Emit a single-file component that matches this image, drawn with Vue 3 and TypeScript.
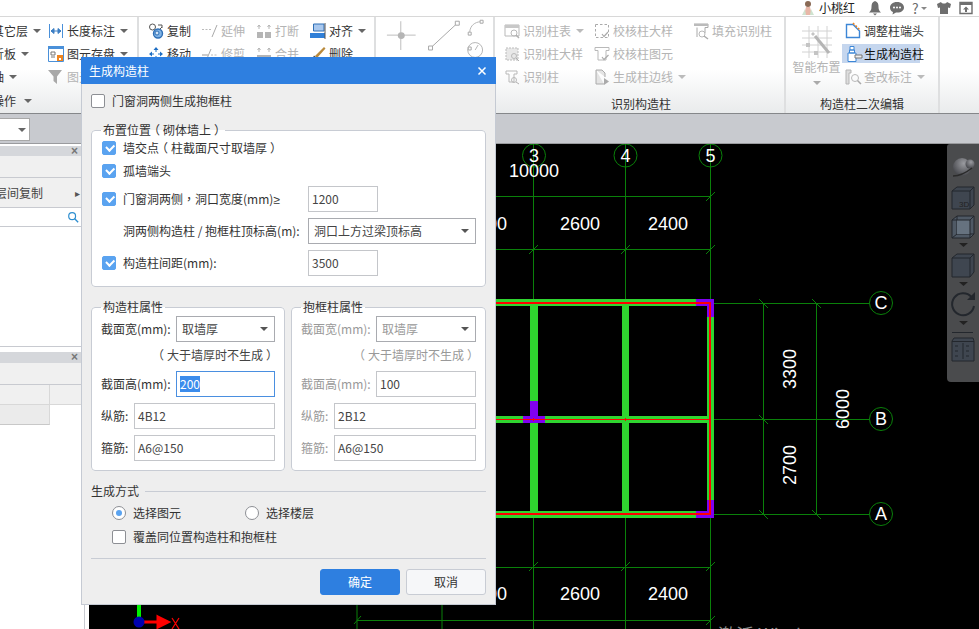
<template>
  <div class="app">
    <div class="title-bar">
      <svg class="avatar" viewBox="0 0 14 16"><circle cx="7" cy="4" r="3" fill="#8a6a55" /><path d="M3 15 L5 7 H9 L11 15 Z" fill="#e8b7a8" /><path d="M1 15 L4 9 L5 15 Z M13 15 L10 9 L9 15 Z" fill="#cfe3d0" /></svg>
      <span class="user">小桃红</span>
      <svg class="top-icon bell" viewBox="0 0 14 16"><path d="M7 1 C4 2 3.500 4 3.500 7 C3.500 10 2.500 11 1 12.500 H13 C11.500 11 10.500 10 10.500 7 C10.500 4 10 2 7 1 Z M5 13.500 H9 L7 15.500 Z" fill="#6e6e6e" /></svg>
      <svg class="top-icon chat" viewBox="0 0 16 14"><path d="M8 1 C3.500 1 1 3.500 1 6.500 C1 9 2.500 10.500 4 11 L3.500 13.500 L7 11.500 C12 12 15 9.500 15 6.500 C15 3.500 12.500 1 8 1 Z" fill="#6e6e6e" /><circle cx="5" cy="6.500" r="1" fill="#fff" /><circle cx="8" cy="6.500" r="1" fill="#fff" /><circle cx="11" cy="6.500" r="1" fill="#fff" /></svg>
      <span class="help">?</span><i class="caret help-caret"></i>
      <svg class="top-icon shirt" viewBox="0 0 16 14"><path d="M5 1 L1 3 L2 7 L4 6.500 V13 H12 V6.500 L14 7 L15 3 L11 1 C10 3 6 3 5 1 Z" fill="#6e6e6e" /></svg>
      <svg class="top-icon upload" viewBox="0 0 14 14"><path d="M1 1.500 H13 V12.500 H1 Z" fill="none" stroke="#6e6e6e" stroke-width="1.400" /><path d="M1 1 H13 V4 H1 Z" fill="#6e6e6e" /><path d="M7 5.500 L10 8.500 H8 V11 H6 V8.500 H4 Z" fill="#6e6e6e" /></svg>
    </div>

    <div class="ribbon">
      <div v-for="group in groups" :key="group.id" class="group" :class="group.id">
        <div class="cols">
          <template v-if="group.id === 'draw'">
            <svg class="draw-icons" viewBox="375 17 118 69">
              <path d="M400 24 V53 M386 38 H415" stroke="#bdbdbd" fill="none" />
              <circle cx="400.500" cy="38.500" r="3.500" fill="#b5b5b5" />
              <path d="M430 51 L457 26" stroke="#a8a8a8" fill="none" />
              <path d="M428 49 h4 v4 h-4 Z M455 24 h4 v4 h-4 Z M468 35 h3 v3 h-3 Z M480 23 h3 v3 h-3 Z M468 50 h3 v3 h-3 Z" fill="#fff" stroke="#a8a8a8" />
              <path d="M469.500 35 C470 28 475 25 480 24.500" stroke="#b5b5b5" fill="none" />
              <circle cx="475" cy="53" r="7.500" fill="none" stroke="#b5b5b5" />
              <path d="M475 53 L478 48" stroke="#b5b5b5" />
            </svg>
          </template>
          <div v-if="group.id === 'edit2'" class="big-btn">
            <svg class="big-icon" viewBox="0 0 34 34">
              <path d="M2 6 H32 M2 13 H32 M2 20 H32 M2 27 H32 M9 1 V33 M18 1 V33 M27 1 V33" stroke="#d2d2d2" fill="none" />
              <path d="M15 11 L29 28" stroke="#b5b5b5" stroke-width="3" />
              <path d="M11 9 l2 -2 l2 2 l-2 2 Z M6 18 h4 v4 h-4 Z M14 26 h4 v4 h-4 Z" fill="#c4c4c4" />
            </svg>
            <span>智能布置</span>
            <i class="caret"></i>
          </div>
          <div v-for="(col, i) in group.cols" :key="i" class="col" :style="{ width: col.width + 'px' }">
            <div v-for="item in col.items" :key="item.label" class="item" :class="{ off: item.off, active: item.active }">
              <svg v-if="item.icon" class="icon" viewBox="0 0 16 16" v-html="icons[item.icon]"></svg>
              <span>{{ item.label }}</span>
              <i v-if="item.caret" class="caret"></i>
            </div>
          </div>
        </div>
        <div class="group-label" :class="{ left: group.id === 'first' }">
          {{ group.label }}<i v-if="group.id === 'first'" class="caret"></i>
        </div>
      </div>
    </div>

    <div class="band">
      <div class="band-select"><i class="caret"></i></div>
    </div>

    <div class="main">
      <aside class="side">
        <div class="panel-head"><span>×</span></div>
        <div class="side-row"></div>
        <div class="side-row copy-row"><span>楼层间复制</span><em>▸</em></div>
        <div class="search">
          <svg viewBox="0 0 14 14"><circle cx="6" cy="6" r="4" fill="none" stroke="#2f8fd0" stroke-width="1.400" /><path d="M9 9 L13 13" stroke="#2f8fd0" stroke-width="1.600" /></svg>
        </div>
        <div class="side-list"></div>
        <div class="panel-head second"><span>×</span></div>
        <div class="side-row"></div>
        <div class="side-table">
          <div class="cell"></div><div class="cell"></div>
          <div class="cell dark"></div><div class="cell blank"></div>
        </div>
      </aside>

      <div class="canvas">
        <svg class="cad" viewBox="89 144 890 485">
          <g stroke="#0a800a" fill="none">
            <path v-for="l in gridLines" :key="l" :d="l" />
            <circle v-for="a in axes" :key="a.t" :cx="a.x" :cy="a.y" r="11.500" />
          </g>
          <g fill="#2fd52f">
            <rect v-for="(w, i) in walls" :key="i" :x="w[0]" :y="w[1]" :width="w[2]" :height="w[3]" />
          </g>
          <g fill="#8000f0">
            <rect v-for="(w, i) in columns" :key="i" :x="w[0]" :y="w[1]" :width="w[2]" :height="w[3]" />
          </g>
          <path d="M357 303 H710 V514 H357" stroke="#ff0000" stroke-width="2" fill="none" />
          <path d="M357 419.500 H710 M533.500 418 V421 M625.500 418 V421" stroke="#ff0000" fill="none" />
          <g fill="#fff" class="dim">
            <text v-for="a in axes" :key="a.t" :x="a.x" :y="a.y + 6" text-anchor="middle">{{ a.t }}</text>
            <text x="534" y="177" text-anchor="middle">10000</text>
            <text v-for="d in dims" :key="d.x + '-' + d.y" :x="d.x" :y="d.y" text-anchor="middle">{{ d.t }}</text>
            <text transform="translate(796 369) rotate(-90)" text-anchor="middle">3300</text>
            <text transform="translate(796 465) rotate(-90)" text-anchor="middle">2700</text>
            <text transform="translate(849 409) rotate(-90)" text-anchor="middle">6000</text>
          </g>
          <path d="M139 604 V620" stroke="#00f000" stroke-width="4" />
          <path d="M142 622 H158 M158 617 L168 622 L158 627 Z" stroke="#f00" stroke-width="3" fill="#f00" />
          <circle cx="139" cy="622" r="5.500" fill="#0000b0" />
          <path d="M172 618 L179 629 M179 618 L172 629" stroke="#f00" stroke-width="1.200" />
          <text x="718" y="642" class="watermark">激活 Windows</text>
        </svg>

        <div class="view-tools">
          <svg viewBox="0 0 32 238">
            <defs>
              <radialGradient id="sphere" cx="0.6" cy="0.3" r="0.8">
                <stop offset="0" stop-color="#9a9ba0" />
                <stop offset="1" stop-color="#3c3d42" />
              </radialGradient>
            </defs>
            <circle cx="15" cy="23" r="9" fill="url(#sphere)" />
            <circle cx="23" cy="20" r="4.500" fill="url(#sphere)" />
            <path d="M6 32 C12 32 20 28 25 24" stroke="#2a2a2a" stroke-width="1.400" fill="none" />
            <g stroke="#23272d" fill="#3f4650">
              <path d="M5 47 L10 43 H27 V61 L23 65 H5 Z" />
              <path d="M5 47 H23 V65 M23 47 L27 43" fill="none" />
              <path d="M5 76 L10 72 H27 V90 L23 94 H5 Z" fill="#4f5965" />
              <path d="M10 72 V90 H27 M10 90 L5 94" fill="none" />
              <path d="M10 76 H23 V90 H10 Z" fill="#66727f" stroke="none" />
              <path d="M5 76 H23 V94 M23 76 L27 72" fill="none" />
              <path d="M5 114 L10 110 H27 V128 L23 133 H5 Z" />
              <path d="M5 114 H23 V133 M23 114 L27 110" fill="none" />
            </g>
            <text x="12" y="63" class="three-d">3D</text>
            <path d="M12 99 h9 l-4.500 4 Z M12 138 h9 l-4.500 4 Z M12 177 h9 l-4.500 4 Z" fill="#222" />
            <path d="M24.500 153 A11 11 0 1 0 27 162" stroke="#23272d" stroke-width="2" fill="none" />
            <path d="M20 156 H28 V148 Z" fill="#23272d" />
            <path d="M5 188.500 H26" stroke="#23272d" />
            <path d="M5 197 L7 194 H26 L27 197 V217 H5 Z" fill="#3f4650" stroke="#23272d" />
            <path d="M5 197.500 H27 M16 199 V215 M8 202 h3 M8 207 h3 M8 212 h3 M19 202 h3 M19 207 h3 M19 212 h3" stroke="#23272d" fill="none" />
          </svg>
        </div>
      </div>
    </div>

    <div class="dialog">
      <div class="dialog-head">
        <span>生成构造柱</span>
        <svg viewBox="0 0 10 10"><path d="M1.500 1.500 L8.500 8.500 M8.500 1.500 L1.500 8.500" stroke="#fff" stroke-width="1.500" /></svg>
      </div>
      <div class="dialog-body">
        <label class="line top-check"><i class="check"></i>门窗洞两侧生成抱框柱</label>

        <fieldset class="box place">
          <legend>布置位置<b class="po">（</b>砌体墙上<b class="pc">）</b></legend>
          <div class="line first"><i class="check on"></i><span>墙交点<b class="po">（</b>柱截面尺寸取墙厚<b class="pc">）</b></span></div>
          <div class="line second"><i class="check on"></i>孤墙端头</div>
          <div class="line with-field third">
            <i class="check on"></i><span class="place-label">门窗洞两侧<b class="p">，</b>洞口宽度(mm)<b class="ge">≥</b></span>
            <div class="field narrow">1200</div>
          </div>
          <div class="line with-field next">
            <span class="place-label indent">洞两侧构造柱 / 抱框柱顶标高(m):</span>
            <div class="field wide sel">洞口上方过梁顶标高<i class="caret"></i></div>
          </div>
          <div class="line with-field next">
            <i class="check on"></i><span class="place-label">构造柱间距(mm):</span>
            <div class="field narrow">3500</div>
          </div>
        </fieldset>

        <div class="props">
          <fieldset class="box prop left-box">
            <legend>构造柱属性</legend>
            <div class="prop-row first-row"><span class="lbl long">截面宽(mm):</span><div class="field grow sel">取墙厚<i class="caret"></i></div></div>
            <div class="hint"><b class="po">（</b>大于墙厚时不生成<b class="pc">）</b></div>
            <div class="prop-row"><span class="lbl long">截面高(mm):</span><div class="field grow focus"><span class="selected">200</span></div></div>
            <div class="prop-row gap"><span class="lbl">纵筋:</span><div class="field grow">4B12</div></div>
            <div class="prop-row gap"><span class="lbl">箍筋:</span><div class="field grow">A6@150</div></div>
          </fieldset>
          <fieldset class="box prop right-box muted">
            <legend>抱框柱属性</legend>
            <div class="prop-row first-row"><span class="lbl long">截面宽(mm):</span><div class="field grow sel">取墙厚<i class="caret"></i></div></div>
            <div class="hint"><b class="po">（</b>大于墙厚时不生成<b class="pc">）</b></div>
            <div class="prop-row"><span class="lbl long">截面高(mm):</span><div class="field grow plain">100</div></div>
            <div class="prop-row gap"><span class="lbl">纵筋:</span><div class="field grow plain">2B12</div></div>
            <div class="prop-row gap"><span class="lbl">箍筋:</span><div class="field grow plain">A6@150</div></div>
          </fieldset>
        </div>

        <div class="mode-title"><span>生成方式</span><hr /></div>
        <div class="line radios">
          <span class="radio-item"><i class="radio on"></i>选择图元</span>
          <span class="radio-item"><i class="radio"></i>选择楼层</span>
        </div>
        <label class="line cover"><i class="check"></i>覆盖同位置构造柱和抱框柱</label>
        <hr class="foot-rule" />
        <div class="buttons">
          <button class="primary">确定</button>
          <button>取消</button>
        </div>
      </div>
    </div>
  </div>
</template>

<script setup lang="ts">
interface Item {
  label: string
  icon?: string
  caret?: boolean
  off?: boolean
  active?: boolean
}

const g = 'fill="none" stroke="#b9b9b9"'
const icons: Record<string, string> = {
  length: '<path d="M1.500 1 V15 M14.500 1 V15" stroke="#4a90d9"/><path d="M3 8 H13 M3 8 L6 5.500 V10.500 Z M13 8 L10 5.500 V10.500 Z" stroke="#3c7fc4" fill="#3c7fc4"/>',
  save: '<path d="M.5 .5 H15.500 V15.500 H.5 Z" fill="#fff" stroke="#4a90d9"/><path d="M0 0 H16 V3 H0 Z" fill="#4a90d9"/><path d="M3 6 H7 V9 H3 Z M3 11 H7" fill="none" stroke="#777"/><path d="M9 9 H15 V15 H9 Z" fill="#f0851f"/><path d="M11 12 H13 V14 H11 Z" fill="#fff"/>',
  filter: '<path d="M0 1 H14 L9 7.500 V15 L5.500 12 V7.500 Z" fill="#a9a9a9"/>',
  copy: '<circle cx="4.500" cy="4" r="3" fill="#fff" stroke="#555"/><circle cx="10" cy="10.500" r="4.500" fill="#7fb3e6" stroke="#2f6fb5" stroke-width="1.400"/><circle cx="9" cy="10" r="2" fill="#d5e6f7" stroke="#2f6fb5"/><path d="M10 2 H14 V5 M12 6 L14 4" fill="none" stroke="#555"/>',
  move: '<path d="M8 1 L10.500 4 H5.500 Z M8 15 L10.500 12 H5.500 Z M1 8 L4 5.500 V10.500 Z M15 8 L12 5.500 V10.500 Z" fill="#1f6fc4"/><path d="M8 4 V6 M8 10 V12 M4 8 H6 M10 8 H12" stroke="#1f6fc4"/>',
  extend: '<path d="M0 6.500 H9" stroke="#bbb" stroke-dasharray="2 1.500"/><path d="M10 14 L15 2" stroke="#aaa"/>',
  trim: '<path d="M0 9 H6" stroke="#999"/><path d="M9 9 H15" stroke="#bbb" stroke-dasharray="2 1.500"/><path d="M4 15 L9 3" stroke="#aaa"/>',
  split: '<path d="M1 9 H7 V15 H1 Z M9 9 H15 V15 H9 Z" fill="#b5b5b5"/><path d="M3 2 V6 M13 2 V6 M1.500 4 L3 2 L4.500 4 M11.500 4 L13 2 L14.500 4" fill="none" stroke="#b5b5b5"/>',
  merge: '<path d="M1 9 H15 V15 H1 Z" fill="#b5b5b5"/><path d="M3 2 V6 M13 2 V6 M1.500 4 L3 2 L4.500 4 M11.500 4 L13 2 L14.500 4" fill="none" stroke="#b5b5b5"/>',
  align: '<path d="M3.500 1 H14 V8 H3.500 Z" fill="#a9c8ee" stroke="#2f6fb5"/><path d="M0 10 H15 V15 H0 Z" fill="#2f7fd8"/><path d="M15 0 V16" stroke="#555"/>',
  remove: '<path d="M5 10 L14 1 L15.500 2.500 L7 12 Z" fill="#b98a3c"/><path d="M1 15 L4 9.500 L7.500 12.500 Z" fill="#444"/>',
  colTable: '<path d="M1 2 H15 V13 H1 Z" ' + g + '/><path d="M1 2 H15 V5 H1 Z" fill="#c8c8c8"/><circle cx="10" cy="10" r="3" ' + g + '/><path d="M12 12 L15 15" stroke="#b0b0b0" stroke-width="1.400"/>',
  colDetail: '<path d="M2 2 H14 V14 H2 Z" fill="#e8e8e8" stroke="#bbb" stroke-dasharray="2 1"/><circle cx="10" cy="10" r="2.500" ' + g + '/><path d="M12 12 L15 15" stroke="#b0b0b0"/>',
  col: '<path d="M2 2 H13 V5 H10 V13 H5 V5 H2 Z" ' + g + '/><circle cx="10" cy="11" r="2.500" ' + g + '/><path d="M12 13 L15 15" stroke="#b0b0b0"/>',
  checkDetail: '<path d="M1.500 1.500 H14.500 V14.500 H1.500 Z" fill="none" stroke="#aaa" stroke-dasharray="2.500 2"/><path d="M8 11 L10 13.500 L14 9" fill="none" stroke="#aaa" stroke-width="1.200"/>',
  checkCol: '<path d="M1 1.500 H15 V4.500 H12 V14 H4 V4.500 H1 Z" ' + g + '/><path d="M8 11 L10 13.500 L14.500 9" fill="none" stroke="#aaa" stroke-width="1.200"/>',
  edge: '<path d="M2 1 V15 H10 M2 1 H8 L11 4 V8" fill="#e4e4e4" stroke="#aaa"/><path d="M10 9 L15 12.500 L10 16 Z" fill="#aaa"/>',
  fill: '<path d="M1 1 H15 V4.500 H12 V10 M4 4.500 V14" fill="none" stroke="#aaa"/><path d="M1 1 H15 V3 H1 Z" fill="#bbb"/><circle cx="9" cy="11" r="3" ' + g + '/><path d="M11 13 L15 16" stroke="#aaa" stroke-width="1.400"/>',
  endAdjust: '<path d="M1.500 1.500 H8 L14.500 8 V14.500 H1.500 Z" fill="#fff" stroke="#3c86d6" stroke-width="1.400"/><path d="M8 0 L15 7" stroke="#f0851f" stroke-width="1.500" stroke-dasharray="2 1.500"/>',
  build: '<path d="M5 0.500 H9 V4 H5 Z M4.500 4 H9.500 V7 H4.500 Z M3 7 H11 V15.500 H3 Z" fill="#fff" stroke="#3c86d6"/><path d="M10 9 H17 V12 H10 Z" fill="#eee" stroke="#777"/>',
  editMark: '<path d="M1 1 H6 V4 H4 V15 H1 Z" fill="#ddd" stroke="#b5b5b5"/><circle cx="10" cy="9" r="3.500" ' + g + '/><path d="M12.500 11.500 L16 15" stroke="#aaa" stroke-width="1.500"/>'
}

const groups: { id: string; label: string; cols: { width: number; items: Item[] }[] }[] = [
  {
    id: 'first',
    label: '操作',
    cols: [
      { width: 56, items: [{ label: '其它层', caret: true }, { label: '折板', caret: true }, { label: '轴', caret: true }] },
      { width: 88, items: [
        { label: '长度标注', icon: 'length', caret: true },
        { label: '图元存盘', icon: 'save', caret: true },
        { label: '图元过滤', icon: 'filter', off: true }
      ] }
    ]
  },
  {
    id: 'modify',
    label: '',
    cols: [
      { width: 54, items: [{ label: '复制', icon: 'copy' }, { label: '移动', icon: 'move' }] },
      { width: 54, items: [{ label: '延伸', icon: 'extend', off: true }, { label: '修剪', icon: 'trim', off: true }] },
      { width: 54, items: [{ label: '打断', icon: 'split', off: true }, { label: '合并', icon: 'merge', off: true }] },
      { width: 60, items: [{ label: '对齐', icon: 'align', caret: true }, { label: '删除', icon: 'remove' }] }
    ]
  },
  { id: 'draw', label: '', cols: [] },
  {
    id: 'identify',
    label: '识别构造柱',
    cols: [
      { width: 90, items: [
        { label: '识别柱表', icon: 'colTable', caret: true, off: true },
        { label: '识别柱大样', icon: 'colDetail', off: true },
        { label: '识别柱', icon: 'col', off: true }
      ] },
      { width: 99, items: [
        { label: '校核柱大样', icon: 'checkDetail', off: true },
        { label: '校核柱图元', icon: 'checkCol', off: true },
        { label: '生成柱边线', icon: 'edge', caret: true, off: true }
      ] },
      { width: 90, items: [{ label: '填充识别柱', icon: 'fill', off: true }] }
    ]
  },
  {
    id: 'edit2',
    label: '构造柱二次编辑',
    cols: [
      { width: 88, items: [
        { label: '调整柱端头', icon: 'endAdjust' },
        { label: '生成构造柱', icon: 'build', active: true },
        { label: '查改标注', icon: 'editMark', caret: true, off: true }
      ] }
    ]
  }
]

const gridLines = [
  'M533.500 144 V629', 'M625.500 144 V629', 'M710.500 144 V629',
  'M357 604 V629', 'M442 604 V629',
  'M763.500 303 V514', 'M816.500 303 V514',
  'M89 196.500 H710', 'M89 249.500 H710', 'M89 567.500 H710', 'M357 620.500 H710',
  'M714 303.500 H869', 'M714 419.500 H869', 'M714 514.500 H869',
  'M529 254 L538 245', 'M621 254 L630 245', 'M706 254 L715 245', 'M706 201 L715 192',
  'M529 571 L538 562', 'M621 571 L630 562', 'M706 571 L715 562', 'M706 625 L715 616', 'M354 624 L361 616',
  'M759 299 L768 308', 'M812 299 L821 308', 'M759 415 L768 424', 'M759 510 L768 519', 'M812 510 L821 519'
]

const axes = [
  { t: '3', x: 534, y: 155.500 },
  { t: '4', x: 625.500, y: 155.500 },
  { t: '5', x: 710.500, y: 155.500 },
  { t: 'C', x: 881, y: 303 },
  { t: 'B', x: 881, y: 419 },
  { t: 'A', x: 881, y: 514 }
]

const dims = [
  { t: '2400', x: 487, y: 230 },
  { t: '2600', x: 580, y: 230 },
  { t: '2400', x: 668, y: 230 },
  { t: '2400', x: 487, y: 600 },
  { t: '2600', x: 580, y: 600 },
  { t: '2400', x: 668, y: 600 }
]

const walls = [
  [357, 299, 357, 7], [357, 416, 357, 7], [357, 511, 357, 7],
  [530, 299, 8, 219], [622, 299, 7, 219], [707, 299, 7, 219]
]

const columns = [
  [696, 299, 18, 7], [707, 299, 7, 18],
  [530, 401, 8, 22], [523, 416, 22, 7],
  [696, 511, 18, 7], [707, 500, 7, 18]
]
</script>

<style>
html, body { margin: 0; overflow: hidden; }
</style>

<style scoped>
.app {
  position: relative;
  width: 979px;
  height: 629px;
  display: flex;
  flex-direction: column;
  overflow: hidden;
  background: #fff;
  color: #333;
  font: 12px/16px "Noto Sans CJK SC", "Noto Sans", sans-serif;
}
i { font-style: normal; display: inline-block; }
.p { font-family: "Noto Sans CJK TC", sans-serif; font-weight: 400; }
.po, .pc { display: inline-block; font-weight: 400; }
.po { transform: translateX(-3px); }
.pc { transform: translateX(3px); }
.ge { font-family: "Noto Sans", sans-serif; font-weight: 400; }

.caret {
  width: 0;
  height: 0;
  border-left: 4px solid transparent;
  border-right: 4px solid transparent;
  border-top: 4px solid #666;
  margin-left: 5px;
  flex: none;
}

.title-bar {
  height: 16px;
  flex: none;
  display: flex;
  align-items: center;
  justify-content: flex-end;
  border-bottom: 1px solid #d8d8d8;
}
.avatar { width: 14px; height: 16px; margin-right: 4px; }
.user { color: #222; width: 36px; margin-right: 13px; }
.top-icon { flex: none; }
.bell { width: 14px; height: 16px; margin-right: 7px; }
.chat { width: 16px; height: 14px; margin-right: 7px; }
.help { color: #6e6e6e; font-size: 14px; width: 8px; }
.help-caret { border-width: 3px 3px 0; border-top-color: #888; margin: 0 9px 0 1px; }
.shirt { width: 16px; height: 14px; margin-right: 7px; }
.upload { width: 14px; height: 14px; margin-right: 6px; }

.ribbon {
  height: 96px;
  flex: none;
  display: flex;
  background: linear-gradient(#fff 0%, #fff 55%, #e9ebec 100%);
  border-bottom: 1px solid #85878a;
}
.group {
  flex: none;
  display: flex;
  flex-direction: column;
  border-right: 2px solid #dedfe0;
  padding-top: 3px;
  box-sizing: border-box;
  overflow: hidden;
}
.first { width: 139px; }
.modify { width: 237px; padding-left: 9px; }
.draw { width: 119px; padding: 0; }
.identify { width: 291px; padding-left: 9px; }
.edit2 { width: 154px; padding-left: 5px; }
.first .col:first-child { margin-left: -8px; }
.cols { height: 69px; display: flex; flex: none; }
.col { flex: none; display: flex; flex-direction: column; gap: 4px; padding-top: 1px; }
.item {
  height: 19px;
  display: flex;
  align-items: center;
  white-space: nowrap;
  color: #333;
}
.item.off { color: #b4b4b4; }
.item.off .caret { border-top-color: #bbb; }
.item.active {
  background: #c5d6ee;
  width: 78px;
  margin-left: -3px;
  padding-left: 3px;
  box-sizing: border-box;
  color: #111;
}
.icon { width: 16px; height: 16px; margin-right: 3px; flex: none; overflow: visible; }
.group-label { text-align: center; line-height: 20px; margin-top: 5px; color: #333; white-space: nowrap; }
.group-label.left { text-align: left; margin-left: -8px; display: flex; align-items: center; margin-top: 2px; }
.group-label.left .caret { margin-left: 8px; }
.identify .group-label { margin-left: -6px; }
.edit2 .group-label { margin-left: -5px; }
.draw-icons { width: 118px; height: 69px; margin-top: -3px; }

.big-btn {
  width: 51px;
  flex: none;
  display: flex;
  flex-direction: column;
  align-items: center;
  color: #b4b4b4;
  white-space: nowrap;
}
.big-icon { width: 34px; height: 34px; margin: 5px 0 0; }
.big-btn .caret { margin: 6px 0 0; border-top-color: #aaa; }
.edit2 .col { margin-left: 3px; }

.band {
  height: 30px;
  flex: none;
  background: #c8cacf;
  border-bottom: 1px solid #9a9b9e;
  box-sizing: border-box;
  padding-top: 4px;
}
.band-select {
  width: 30px;
  height: 23px;
  background: #fff;
  border: 1px solid #a8a8a8;
  border-left: none;
  box-sizing: border-box;
  display: flex;
  align-items: center;
  justify-content: flex-end;
  padding-right: 3px;
}

.main { flex: 1; display: flex; min-height: 0; }
.side {
  width: 84px;
  flex: none;
  border-right: 1px solid #c8cad0;
  margin-right: 4px;
  box-sizing: content-box;
  padding-top: 2px;
  overflow: hidden;
}
.panel-head {
  height: 10px;
  background: #d5d7db;
  text-align: right;
  position: relative;
}
.panel-head span {
  position: absolute;
  left: 71px;
  top: -3px;
  color: #777;
  font: 700 12px/16px "Liberation Sans", sans-serif;
}
.panel-head.second { height: 11px; }
.side-row { height: 21px; background: #f0f0f0; border-bottom: 1px solid #c8cad0; }
.copy-row {
  height: 29px;
  display: flex;
  align-items: center;
  white-space: nowrap;
  color: #444;
  position: relative;
  margin-left: 0;
}
.copy-row span { margin-left: -17px; }
.copy-row em {
  position: absolute;
  left: 75px;
  font-style: normal;
  color: #555;
  font-size: 10px;
}
.search {
  height: 18px;
  border-bottom: 1px solid #c8cad0;
  display: flex;
  align-items: center;
  padding-left: 67px;
}
.search svg { width: 12px; height: 12px; }
.side-list { height: 119px; border-bottom: 1px solid #c8cad0; margin-bottom: 5px; }
.side-table {
  display: grid;
  grid-template-columns: 50px 1fr;
  grid-auto-rows: 20px;
}
.cell { background: #f0f0f0; border-right: 1px solid #d8d8d8; border-bottom: 1px solid #d8d8d8; }
.cell.dark { background: #ebebeb; border-bottom-color: #c8c8c8; }
.cell.blank { background: #fff; border: none; }

.canvas {
  flex: 1;
  position: relative;
  background: #000;
  overflow: hidden;
}
.cad { position: absolute; inset: 0; width: 100%; height: 100%; }
.dim { font: 18px "Liberation Sans", sans-serif; }
.watermark { fill: #8a8a8a; font: 18px "Noto Sans CJK SC", sans-serif; }
.view-tools {
  position: absolute;
  right: 0;
  top: 0;
  width: 32px;
  height: 238px;
  background: #4a4b4d;
  border-radius: 3px 0 0 4px;
}
.view-tools svg { width: 32px; height: 238px; display: block; }
.three-d { fill: #222; font: 8px "Liberation Sans", sans-serif; }

.dialog {
  position: absolute;
  left: 81px;
  top: 57px;
  width: 415px;
  box-sizing: border-box;
  border: 1px solid #c5cad3;
  border-top: none;
  background: #eee;
}
.dialog-head {
  height: 27px;
  margin: 0 -1px;
  background: #2e7fe0;
  color: #fff;
  display: flex;
  align-items: center;
  justify-content: space-between;
  padding: 0 9px 0 8px;
}
.dialog-head svg { width: 10px; height: 10px; }
.dialog-body { padding: 7px 9px 9px; }

.line { height: 20px; display: flex; align-items: center; white-space: nowrap; color: #333; }
.check {
  width: 14px;
  height: 14px;
  box-sizing: border-box;
  border: 1px solid #8d8f94;
  border-radius: 2px;
  background: #fff;
  margin-right: 7px;
  flex: none;
  position: relative;
}
.check.on { background: #5aa3f0; border-color: #5aa3f0; }
.check.on::after {
  content: "";
  position: absolute;
  left: 3px;
  top: 1.500px;
  width: 6px;
  height: 3.500px;
  border-left: 2px solid #fff;
  border-bottom: 2px solid #fff;
  transform: rotate(-45deg);
}

.box {
  margin: 0;
  padding: 0 9px 9px;
  border: 1px solid #c8ccd4;
  border-radius: 4px;
  background: #fff;
  min-width: 0;
}
legend {
  padding: 0 2px;
  margin-left: 0;
  line-height: 16px;
  color: #333;
}
.place { margin-top: 11px; padding: 0 9px 10px 10px; }
.place legend { margin-left: -1px; }
.place .first { margin-top: 0; }
.place .second { margin-top: 3px; }
.place .third { margin-top: 5px; }
.with-field { height: 26px; }
.next { margin-top: 6px; }
.place-label { width: 185px; }
.place-label.indent { width: 185px; margin-left: 21px; }
.check + .place-label { width: 185px; }

.field {
  height: 26px;
  box-sizing: border-box;
  border: 1px solid #c4c6ca;
  background: #fff;
  color: #444;
  padding: 0 3px;
  display: flex;
  align-items: center;
  white-space: nowrap;
  position: relative;
}
.narrow { width: 70px; }
.wide { width: 168px; }
.sel { border-color: #a9abb0; padding-left: 5px; justify-content: space-between; }
.sel .caret { border-width: 4px 4px 0; margin: 0 3px 0 0; border-top-color: #555; }
.grow { flex: 1; min-width: 0; }
.focus { border-color: #4a8fe0; }
.selected { background: #3b8cec; color: #fff; }

.props { display: flex; gap: 6px; margin-top: 12px; }
.prop { width: 194px; box-sizing: border-box; }
.right-box { width: 195px; }
.prop-row { display: flex; align-items: center; white-space: nowrap; }
.first-row { margin-top: 1px; }
.gap { margin-top: 6px; }
.lbl { width: 33px; flex: none; color: #333; }
.lbl.long { width: 75px; }
.hint { height: 20px; margin: 5px 0 4px; text-align: right; color: #444; white-space: nowrap; }
.muted .lbl, .muted .hint, .muted legend ~ .prop-row .sel { color: #999; }
.muted legend { color: #333; }
.plain { color: #444; }

.mode-title { display: flex; align-items: center; height: 20px; margin-top: 10px; color: #333; }
.mode-title span { margin-right: 6px; }
.mode-title hr { flex: 1; border: none; border-top: 1px solid #c8ccd4; margin: 0; }
.radios { margin: 2px 0 0 21px; }
.radio-item { display: flex; align-items: center; width: 133px; }
.radio {
  width: 14px;
  height: 14px;
  box-sizing: border-box;
  border: 1px solid #8d8f94;
  border-radius: 50%;
  background: #fff;
  margin-right: 7px;
  position: relative;
}
.radio.on::after {
  content: "";
  position: absolute;
  left: 3px;
  top: 3px;
  width: 6px;
  height: 6px;
  border-radius: 50%;
  background: #5aa3f0;
}
.cover { margin: 4px 0 0 21px; }
.foot-rule { border: none; border-top: 1px solid #c8ccd4; margin: 11px 0 10px; }
.buttons { display: flex; justify-content: flex-end; gap: 6px; }
button {
  width: 80px;
  height: 26px;
  box-sizing: border-box;
  border: 1px solid #c8ccd4;
  border-radius: 3px;
  background: #f6f7f9;
  color: #333;
  font: inherit;
  padding: 0;
}
button.primary { background: #2e7fe0; border-color: #2e7fe0; color: #fff; }
</style>
